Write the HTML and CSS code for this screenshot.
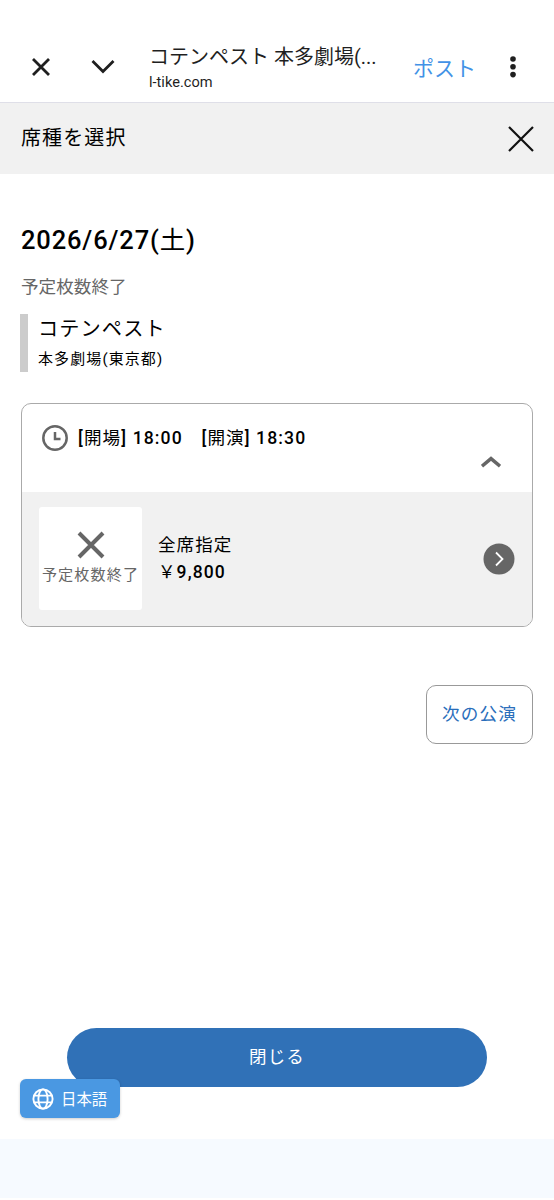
FILE: index.html
```
<!DOCTYPE html>
<html lang="ja">
<head>
    <meta charset="UTF-8">
    <meta name="viewport" content="width=device-width, initial-scale=1.0">
    <title>席種を選択</title>
    <link rel="stylesheet" href="styles.css">
</head>
<body>
<header class="browser-bar">
    <svg class="icon-close" width="20" height="20" viewBox="0 0 20 20"><path d="M2 2L18 18M18 2L2 18"/></svg>
    <svg class="icon-down" width="24" height="16" viewBox="0 0 24 16"><path d="M1.5 2L12 12.5L22.5 2"/></svg>
    <div class="page-info">
        <div class="page-title">コテンペスト 本多劇場(...</div>
        <div class="page-url">l-tike.com</div>
    </div>
    <a class="post">ポスト</a>
    <svg class="icon-menu" width="6" height="22" viewBox="0 0 6 22"><circle cx="3" cy="3" r="2.8"/><circle cx="3" cy="10.8" r="2.8"/><circle cx="3" cy="18.6" r="2.8"/></svg>
</header>

<div class="modal-head">
    <h1>席種を選択</h1>
    <svg class="modal-close" width="26" height="26" viewBox="0 0 26 26"><path d="M1 1L25 25M25 1L1 25"/></svg>
</div>

<main>
    <h2 class="date"><b>2026/6/27(</b>土<b>)</b></h2>
    <p class="status">予定枚数終了</p>
    <div class="event">
        <p class="event-name">コテンペスト</p>
        <p class="event-place">本多劇場(東京都)</p>
    </div>

    <section class="card">
        <div class="card-head">
            <svg class="icon-clock" width="26" height="26" viewBox="0 0 26 26"><circle cx="13" cy="13" r="11.7"/><path d="M13 7V14H18.5"/></svg>
            <p class="time"><b>[</b>開場<b>] 18:00</b>　<b>[</b>開演<b>] 18:30</b></p>
            <svg class="icon-up" width="20" height="12" viewBox="0 0 20 12"><path d="M1 10.2L10 2.6L19 10.2"/></svg>
        </div>
        <div class="seat">
            <div class="seat-status">
                <svg width="28" height="28" viewBox="0 0 28 28"><path d="M2 2L26 26M26 2L2 26"/></svg>
                <span>予定枚数終了</span>
            </div>
            <div class="seat-info">
                <p>全席指定</p>
                <p class="price">￥<b>9,800</b></p>
            </div>
            <svg class="icon-next" width="32" height="32" viewBox="0 0 32 32"><circle cx="16" cy="16" r="15.5"/><path d="M13 9.5L19.5 16L13 22.5"/></svg>
        </div>
    </section>

    <button class="next-stage">次の公演</button>
</main>

<button class="close-btn">閉じる</button>

<div class="lang">
    <svg width="22" height="22" viewBox="0 0 22 22"><circle cx="11" cy="11" r="9.6"/><ellipse cx="11" cy="11" rx="4.6" ry="9.6"/><path d="M2 7.6H20M2 14.4H20"/></svg>
    <span>日本語</span>
</div>
<footer class="bottom-strip"></footer>
</body>
</html>
```
FILE: styles.css
```
* {
    box-sizing: border-box;
}
body {
    margin: 0;
    height: 1200px;
    display: flex;
    flex-direction: column;
    position: relative;
    background-color: #fff;
    color: #000;
    font-family: Roboto, "Noto Sans CJK JP", sans-serif;
    letter-spacing: 1.1px;
    overflow: hidden;
}
h1, h2, p {
    margin: 0;
    font-weight: 400;
}
b {
    font-weight: 500;
}
svg {
    display: block;
    flex: none;
    fill: none;
}
button {
    font-family: inherit;
    letter-spacing: inherit;
    padding: 0;
}

/* browser bar */
.browser-bar {
    height: 103px;
    padding: 31px 38px 0 31px;
    display: flex;
    align-items: center;
    border-bottom: 1px solid #dfdfe8;
    color: #1f1f1f;
    letter-spacing: 0;
}
.icon-close, .icon-down {
    stroke: #1f1f1f;
    stroke-width: 2.8;
}
.icon-down {
    margin-left: 40px;
}
.page-info {
    width: 264px;
    margin-left: 34px;
    padding-top: 4px;
    white-space: nowrap;
}
.page-title {
    font-size: 20px;
    line-height: 28px;
}
.page-url {
    font-size: 14.6px;
    line-height: 23px;
}
.post {
    padding-top: 5px;
    color: #4292e6;
    font-size: 21px;
    line-height: 30px;
}
.icon-menu {
    margin-left: auto;
    fill: #1f1f1f;
}

/* modal */
.modal-head {
    height: 71px;
    padding: 0 20px 0 21px;
    display: flex;
    align-items: center;
    justify-content: space-between;
    background-color: #f1f1f1;
}
.modal-head h1 {
    padding-bottom: 1px;
    font-size: 20px;
    line-height: 30px;
}
.modal-close {
    stroke: #111;
    stroke-width: 2.2;
}
main {
    height: 854px;
    padding: 49px 21px 0;
    display: flex;
    flex-direction: column;
}
.date {
    font-size: 25.5px;
    line-height: 34px;
    letter-spacing: 0.85px;
}
.status {
    margin-top: 17px;
    color: #666;
    font-size: 17.6px;
    line-height: 26px;
    letter-spacing: 0;
}
.event {
    height: 58px;
    margin-top: 14px;
    margin-left: -1px;
    padding-left: 10px;
    border-left: 8px solid #ccc;
}
.event-name {
    font-size: 20.2px;
    line-height: 31px;
}
.event-place {
    font-size: 15px;
    line-height: 28px;
}

/* performance card */
.card {
    height: 224px;
    margin-top: 31px;
    border: 1px solid #aaa;
    border-radius: 10px;
    overflow: hidden;
}
.card-head {
    height: 88px;
    padding: 21px 31px 0 20px;
    display: flex;
    align-items: flex-start;
}
.icon-clock {
    stroke: #666;
    stroke-width: 2.5;
}
.time {
    margin-left: 10px;
    font-size: 17.6px;
    line-height: 26px;
}
.icon-up {
    margin: 31px 0 0 auto;
    stroke: #666;
    stroke-width: 3.4;
}
.seat {
    height: 134px;
    padding: 0 17px 1px 17px;
    display: flex;
    align-items: center;
    background-color: #f1f1f1;
}
.seat-status {
    width: 103px;
    height: 103px;
    padding-top: 24px;
    display: flex;
    flex-direction: column;
    align-items: center;
    border-radius: 3px;
    background-color: #fff;
    color: #666;
    font-size: 15.1px;
    line-height: 22px;
    white-space: nowrap;
}
.seat-status svg {
    margin-bottom: 5px;
    stroke: #666;
    stroke-width: 4;
}
.seat-info {
    margin-left: 16px;
    padding-top: 1px;
    font-size: 17.5px;
    line-height: 27px;
}
.icon-next {
    margin-left: auto;
}
.icon-next circle {
    fill: #666;
}
.icon-next path {
    stroke: #fff;
    stroke-width: 1.8;
}
.next-stage {
    width: 107px;
    height: 59px;
    margin-top: 58px;
    padding-bottom: 4px;
    align-self: flex-end;
    border: 1px solid #999;
    border-radius: 10px;
    background-color: #fff;
    color: #2a6ebb;
    font-size: 17.6px;
}

/* bottom */
.close-btn {
    width: 420px;
    height: 59px;
    padding-bottom: 4px;
    align-self: center;
    flex: none;
    border: none;
    border-radius: 30px;
    background-color: #3071b7;
    color: #fff;
    font-size: 17.5px;
}
.lang {
    position: absolute;
    left: 20px;
    top: 1079px;
    width: 100px;
    height: 39px;
    padding-left: 12px;
    display: flex;
    align-items: center;
    gap: 7px;
    border-radius: 6px;
    background-color: #4a98e2;
    box-shadow: 0 1px 3px rgba(0, 0, 0, 0.2);
    color: #fff;
    font-size: 15.4px;
    letter-spacing: 0;
}
.lang span {
    padding-bottom: 2px;
}
.lang svg {
    stroke: #fff;
    stroke-width: 1.9;
}
.bottom-strip {
    height: 59px;
    margin-top: 52px;
    background-color: #f6faff;
}
```
